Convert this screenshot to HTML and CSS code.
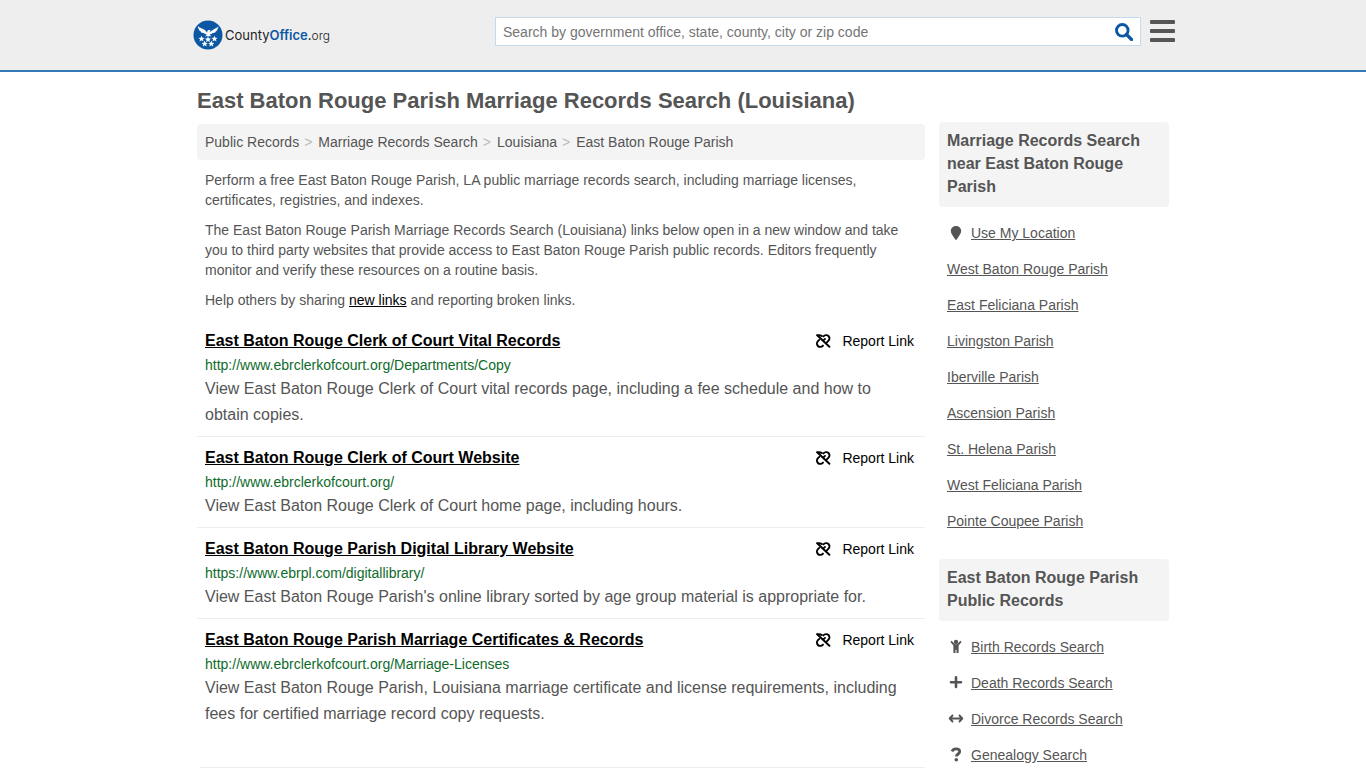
FILE: index.html
```html
<!DOCTYPE html>
<html lang="en">
<head>
<meta charset="utf-8">
<meta name="viewport" content="width=device-width, initial-scale=1">
<title>East Baton Rouge Parish Marriage Records Search (Louisiana)</title>
<link rel="stylesheet" href="styles.css">
</head>
<body>
<svg class="sprite" aria-hidden="true">
  <symbol id="unlink" viewBox="0 0 16 14">
    <g fill="none" stroke="#000" stroke-width="1.900" stroke-linecap="round">
      <path d="M2.200 1.200l12.200 11.600"/>
      <path d="M2.400 1.400c1.800-.4 3.200-.2 4.400.7"/>
      <path d="M8.400 2.400c1.400-1.600 3.800-1.700 5.100-.4 1.300 1.300 1.300 3.400 0 4.700L11.800 8.400"/>
      <path d="M4.300 5.800L2.900 7.200c-1.300 1.300-1.300 3.500 0 4.800 1.300 1.300 3.700 1.200 5.100-.4"/>
      <path d="M8.700 6.200l1.300-1.300"/>
    </g>
  </symbol>
</svg>
<header class="site-header">
  <div class="header-inner">
    <a class="logo" href="#">
      <svg class="logo-mark" viewBox="0 0 30 30" aria-hidden="true">
        <circle cx="15" cy="15" r="14.500" fill="#0b57a4"/>
        <path fill="#fff" d="M4.800 6.300c1.800 1.500 4.300 2.100 6.200 3.300 1.500.9 2.300 2 3 3.200l.4-1.600c.3-1 1.300-1.400 2.500-1l.9.900-1 .4.100.9c.8-1.200 1.600-1.700 2.900-2.500 1.900-1.200 4.100-1.700 5.700-3.600-.1 1.500-.6 2.400-1.400 3.100l.7-.1c-.5 1.300-1.400 2-2.500 2.300l.5.200c-.9 1-2 1.300-3.200 1.300-.9 1-2 1.300-3 1.500l2 1.900-2-.5-1.300.6-1.400-.6-2 .5 2-1.900c-1-.2-2.200-.5-3.100-1.500-1.200 0-2.300-.3-3.200-1.300l.5-.2c-1.100-.3-2-1-2.500-2.300l.7.100C5.400 8.700 4.800 7.900 4.800 6.300z"/>
        <g fill="#fff">
          <path id="star" d="M8.500 15.700l.9 2.100 2.200.1-1.700 1.400.6 2.200-2-1.200-2 1.200.6-2.200-1.700-1.400 2.200-.1z"/>
          <use href="#star" x="6.500" y=".6"/>
          <use href="#star" x="13"/>
          <use href="#star" x="3.200" y="5"/>
          <use href="#star" x="9.800" y="5"/>
        </g>
      </svg>
      <span class="logo-text">County<b>Office</b>.<small>org</small></span>
    </a>
    <form class="search" role="search">
      <input class="search-input" type="text" aria-label="Search" placeholder="Search by government office, state, county, city or zip code">
      <button class="search-button" type="button" aria-label="Search">
        <svg viewBox="0 0 18 18" aria-hidden="true"><circle cx="7.300" cy="7.300" r="5.800" fill="none" stroke="#0b57a4" stroke-width="2.900"/><path d="M11.500 11.500l5 5" stroke="#0b57a4" stroke-width="3.200" stroke-linecap="round"/></svg>
      </button>
    </form>
    <button class="menu-button" type="button" aria-label="Menu"><span></span><span></span><span></span></button>
  </div>
</header>

<div class="page">
  <h1 class="title">East Baton Rouge Parish Marriage Records Search (Louisiana)</h1>
  <div class="columns">
    <main class="main">
      <nav class="crumbs" aria-label="Breadcrumb">
        <a href="#">Public Records</a><i>&gt;</i><a href="#">Marriage Records Search</a><i>&gt;</i><a href="#">Louisiana</a><i>&gt;</i><a href="#">East Baton Rouge Parish</a>
      </nav>
      <div class="intro">
        <p>Perform a free East Baton Rouge Parish, LA public marriage records search, including marriage licenses, certificates, registries, and indexes.</p>
        <p>The East Baton Rouge Parish Marriage Records Search (Louisiana) links below open in a new window and take you to third party websites that provide access to East Baton Rouge Parish public records. Editors frequently monitor and verify these resources on a routine basis.</p>
        <p>Help others by sharing <a href="#">new links</a> and reporting broken links.</p>
      </div>
      <article class="result">
        <div class="result-head">
          <h2><a href="#">East Baton Rouge Clerk of Court Vital Records</a></h2>
          <a class="report" href="#"><svg aria-hidden="true"><use href="#unlink"/></svg>Report Link</a>
        </div>
        <div class="url">http://www.ebrclerkofcourt.org/Departments/Copy</div>
        <p>View East Baton Rouge Clerk of Court vital records page, including a fee schedule and how to obtain copies.</p>
      </article>
      <article class="result">
        <div class="result-head">
          <h2><a href="#">East Baton Rouge Clerk of Court Website</a></h2>
          <a class="report" href="#"><svg aria-hidden="true"><use href="#unlink"/></svg>Report Link</a>
        </div>
        <div class="url">http://www.ebrclerkofcourt.org/</div>
        <p>View East Baton Rouge Clerk of Court home page, including hours.</p>
      </article>
      <article class="result">
        <div class="result-head">
          <h2><a href="#">East Baton Rouge Parish Digital Library Website</a></h2>
          <a class="report" href="#"><svg aria-hidden="true"><use href="#unlink"/></svg>Report Link</a>
        </div>
        <div class="url">https://www.ebrpl.com/digitallibrary/</div>
        <p>View East Baton Rouge Parish's online library sorted by age group material is appropriate for.</p>
      </article>
      <article class="result">
        <div class="result-head">
          <h2><a href="#">East Baton Rouge Parish Marriage Certificates &amp; Records</a></h2>
          <a class="report" href="#"><svg aria-hidden="true"><use href="#unlink"/></svg>Report Link</a>
        </div>
        <div class="url">http://www.ebrclerkofcourt.org/Marriage-Licenses</div>
        <p>View East Baton Rouge Parish, Louisiana marriage certificate and license requirements, including fees for certified marriage record copy requests.</p>
      </article>
      <hr class="rule">
    </main>
    <aside class="side">
      <h3>Marriage Records Search near East Baton Rouge Parish</h3>
      <ul>
        <li><svg viewBox="0 0 18 18" aria-hidden="true"><path d="M9 2c-3 0-5.200 2.200-5.200 5.100 0 2.500 2.600 5.400 4.500 8.500.4.600 1 .6 1.400 0 1.900-3.100 4.500-6 4.500-8.500C14.200 4.200 12 2 9 2z"/></svg><a href="#">Use My Location</a></li>
        <li><a href="#">West Baton Rouge Parish</a></li>
        <li><a href="#">East Feliciana Parish</a></li>
        <li><a href="#">Livingston Parish</a></li>
        <li><a href="#">Iberville Parish</a></li>
        <li><a href="#">Ascension Parish</a></li>
        <li><a href="#">St. Helena Parish</a></li>
        <li><a href="#">West Feliciana Parish</a></li>
        <li><a href="#">Pointe Coupee Parish</a></li>
      </ul>
      <h3>East Baton Rouge Parish Public Records</h3>
      <ul>
        <li><svg viewBox="0 0 18 18" aria-hidden="true"><circle cx="9" cy="3.900" r="2.200"/><path d="M4.600 2.700L7.900 6.200h2.200l3.300-3.500 1.200 1.200-3 3.500V15H9.500v-3.300h-1V15H6.400V7.400l-3-3.500z"/></svg><a href="#">Birth Records Search</a></li>
        <li><svg viewBox="0 0 18 18" aria-hidden="true"><path d="M9 3.400v9.600M4 8.200h10" fill="none" stroke="#555" stroke-width="2.600" stroke-linecap="round"/></svg><a href="#">Death Records Search</a></li>
        <li><svg viewBox="0 0 18 18" aria-hidden="true"><path d="M3 8.500h12M5.500 5.500l-2.800 3 2.800 3M12.500 5.500l2.800 3-2.800 3" fill="none" stroke="#555" stroke-width="1.900" stroke-linecap="round" stroke-linejoin="round"/></svg><a href="#">Divorce Records Search</a></li>
        <li><svg viewBox="0 0 18 18" aria-hidden="true"><path d="M5 5.400C5.700 3.700 7.100 2.800 9 2.800c2.300 0 3.700 1.100 3.700 2.800 0 2.500-3.300 2.300-3.300 4.800" fill="none" stroke="#555" stroke-width="2.800"/><circle cx="9.300" cy="13.800" r="1.800"/></svg><a href="#">Genealogy Search</a></li>
      </ul>
    </aside>
  </div>
</div>
</body>
</html>
```

FILE: styles.css
```css
* { box-sizing: border-box; }

body {
  margin: 0;
  background: #fff;
  color: #555;
  font: 14px/20px "Liberation Sans", Arial, sans-serif;
}

h1, h2, h3, p, ul { margin: 0; padding: 0; }
a { color: inherit; }
.sprite { display: none; }

.site-header {
  background: #eee;
  border-bottom: 2px solid #337ab7;
}
.header-inner {
  display: flex;
  align-items: flex-start;
  max-width: 984px;
  min-height: 70px;
  margin: 0 auto;
  padding-top: 17px;
}
.logo {
  display: flex;
  align-items: center;
  gap: 2px;
  margin: 3px auto 0 2px;
  color: #222;
  text-decoration: none;
}
.logo-mark { width: 30px; height: 30px; }
.logo-text { font: 13px/20px Inter, sans-serif; }
.logo-text b { color: #0b57a4; font-weight: 600; }
.logo-text small { font-size: 12px; font-weight: 300; }

.search {
  display: flex;
  flex: 0 1 646px;
  height: 29px;
  background: #fff;
  border: 1px solid #c5dbec;
}
.search-input {
  flex: 1;
  min-width: 0;
  padding: 0 7px;
  border: 0;
  background: none;
  color: #555;
  font: inherit;
}
.search-input::placeholder { color: #757575; opacity: 1; }
.search-button {
  display: flex;
  align-items: center;
  justify-content: center;
  width: 32px;
  padding: 0;
  border: 0;
  background: none;
}
.search-button svg { width: 18px; height: 18px; }
.menu-button {
  display: flex;
  flex-direction: column;
  gap: 5px;
  width: 25px;
  margin: 3px 0 0 9px;
  padding: 0;
  border: 0;
  background: none;
}
.menu-button span {
  width: 100%;
  height: 4px;
  border-radius: 1px;
  background: #555;
}

.page {
  max-width: 972px;
  margin: 0 auto;
  padding-top: 17px;
}
.title { font-size: 22px; line-height: 24px; }
.columns {
  display: flex;
  align-items: flex-start;
  gap: 14px;
  padding-top: 9px;
}
.main { flex: 1; min-width: 0; padding-top: 2px; }

.crumbs {
  padding: 8px;
  border-radius: 4px;
  background: #f4f4f4;
}
.crumbs a { text-decoration: none; }
.crumbs i {
  padding: 0 6px 0 5px;
  color: #bbb;
  font-style: normal;
}
.intro {
  display: grid;
  gap: 10px;
  padding: 10px 8px;
}
.intro a { color: #000; }

.result { padding: 8px; border-bottom: 1px solid #eee; }
.result:nth-last-of-type(1) { border-bottom: 0; }
.result-head {
  display: flex;
  justify-content: space-between;
  height: 25px;
  padding-right: 3px;
  color: #000;
}
.result h2 { font-size: 16px; line-height: 25px; }
.report {
  display: flex;
  align-items: center;
  gap: 11px;
  text-decoration: none;
}
.report svg { width: 16px; height: 14px; }
.url {
  padding-top: 2px;
  color: #0e6b2b;
  line-height: 21px;
}
.result p { font-size: 16px; line-height: 26px; }
.rule {
  height: 1px;
  margin: 32px 0 24px 3px;
  border: 0;
  background: #eee;
}

.side { flex: 0 0 230px; }
.side h3 {
  padding: 7px 8px 9px;
  border-radius: 4px;
  background: #f4f4f4;
  font-size: 16px;
  line-height: 23px;
}
.side ul { padding: 8px 8px 20px; list-style: none; }
.side li {
  display: flex;
  align-items: center;
  gap: 6px;
  height: 36px;
}
.side li svg { width: 18px; height: 18px; fill: #555; }
```
